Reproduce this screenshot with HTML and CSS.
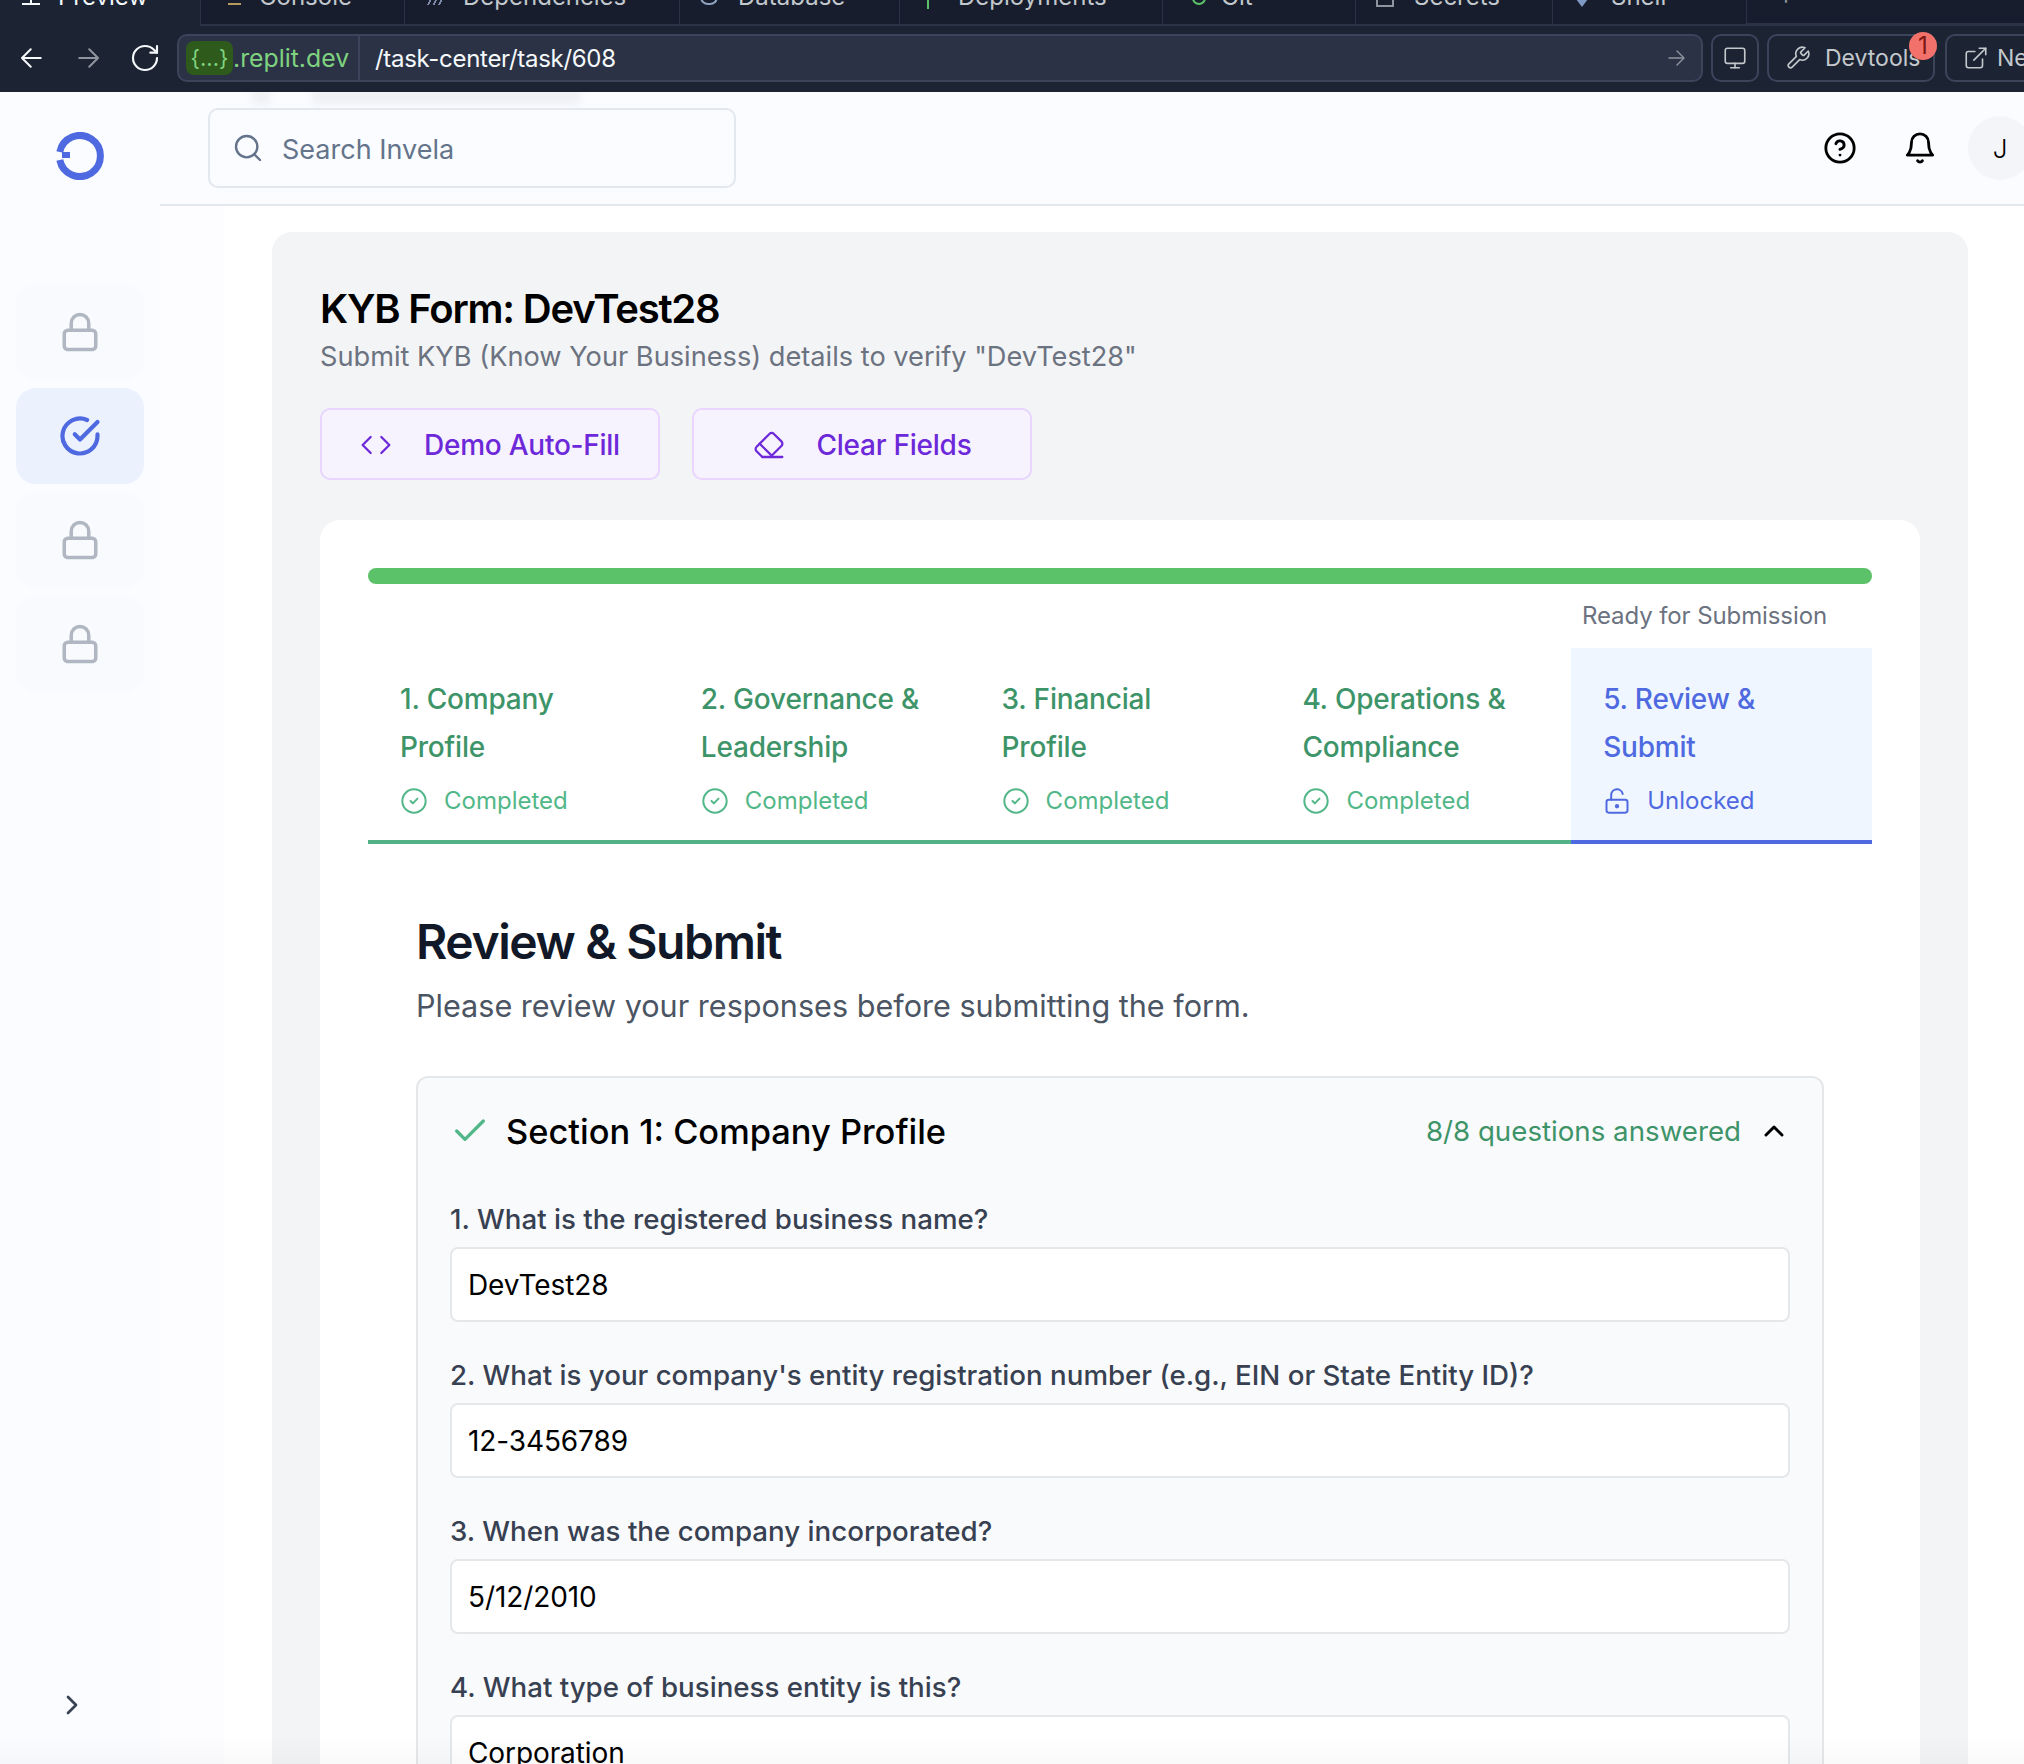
FILE: index.html

```html
<!DOCTYPE html>
<html>
  <head>
    <meta charset="utf-8">
    <title>KYB Form: DevTest28</title>
    <link rel="stylesheet" href="styles.css">
  </head>
  <body>
    <svg class="sprite" xmlns="http://www.w3.org/2000/svg">
      <symbol id="i-back" viewBox="0 0 24 24"><path d="M19 12H5"/><path d="m11 5-7 7 7 7"/></symbol>
      <symbol id="i-next" viewBox="0 0 24 24"><path d="M5 12h14"/><path d="m13 5 7 7-7 7"/></symbol>
      <symbol id="i-reload" viewBox="0 0 24 24"><path d="M21 12a9 9 0 1 1-9-9c2.52 0 4.93 1 6.74 2.74L21 8"/><path d="M21 3v5h-5"/></symbol>
      <symbol id="i-monitor" viewBox="0 0 24 24"><rect x="3" y="3" width="18" height="14" rx="2"/><path d="M8 21h8"/><path d="M12 17v4"/></symbol>
      <symbol id="i-wrench" viewBox="0 0 24 24"><path d="M14.7 6.3a1 1 0 0 0 0 1.4l1.6 1.6a1 1 0 0 0 1.4 0l3.77-3.77a6 6 0 0 1-7.94 7.94l-6.91 6.91a2.12 2.12 0 0 1-3-3l6.91-6.91a6 6 0 0 1 7.94-7.94l-3.76 3.76z"/></symbol>
      <symbol id="i-external" viewBox="0 0 24 24"><path d="M18 13v6a2 2 0 0 1-2 2H5a2 2 0 0 1-2-2V8a2 2 0 0 1 2-2h6"/><path d="M15 3h6v6"/><path d="M10 14 21 3"/></symbol>
      <symbol id="i-search" viewBox="0 0 24 24"><circle cx="11" cy="11" r="8"/><path d="m21 21-4.3-4.3"/></symbol>
      <symbol id="i-help" viewBox="0 0 24 24"><circle cx="12" cy="12" r="10"/><path d="M9.09 9a3 3 0 0 1 5.83 1c0 2-3 3-3 3"/><path d="M12 17h.01"/></symbol>
      <symbol id="i-bell" viewBox="0 0 24 24"><path d="M6 8a6 6 0 0 1 12 0c0 7 3 9 3 9H3s3-2 3-9"/><path d="M10.3 21a1.94 1.94 0 0 0 3.4 0"/></symbol>
      <symbol id="i-lock" viewBox="0 0 24 24"><rect x="3" y="11" width="18" height="11" rx="2"/><path d="M7 11V7a5 5 0 0 1 10 0v4"/></symbol>
      <symbol id="i-unlock" viewBox="0 0 24 24"><rect x="3" y="11" width="18" height="11" rx="2"/><circle cx="12" cy="16.5" r="1"/><path d="M7 11V7a5 5 0 0 1 9.9-1"/></symbol>
      <symbol id="i-task" viewBox="0 0 24 24"><path d="M22 11.08V12a10 10 0 1 1-5.93-9.14"/><path d="M22 4 12 14.01l-3-3"/></symbol>
      <symbol id="i-done" viewBox="0 0 24 24"><circle cx="12" cy="12" r="10"/><path d="m9 12 2 2 4-4"/></symbol>
      <symbol id="i-code" viewBox="0 0 24 24"><path d="m16 18 6-6-6-6"/><path d="m8 6-6 6 6 6"/></symbol>
      <symbol id="i-eraser" viewBox="0 0 24 24"><path d="m7 21-4.3-4.3c-1-1-1-2.5 0-3.4l9.6-9.6c1-1 2.5-1 3.4 0l5.6 5.6c1 1 1 2.5 0 3.4L13 21"/><path d="M22 21H7"/><path d="m5 11 9 9"/></symbol>
      <symbol id="i-check" viewBox="0 0 24 24"><path d="M20 6 9 17l-5-5"/></symbol>
      <symbol id="i-up" viewBox="0 0 24 24"><path d="m18 15-6-6-6 6"/></symbol>
      <symbol id="i-right" viewBox="0 0 24 24"><path d="m9 18 6-6-6-6"/></symbol>
    </svg>

    <!-- replit chrome -->
    <div class="chrome">
      <div class="chrome-tabs">
        <div class="chrome-tab chrome-tab-on"><span class="tab-glyph glyph-preview"></span>Preview</div>
        <div class="chrome-tab"><span class="tab-glyph glyph-console"></span>Console</div>
        <div class="chrome-tab"><span class="tab-glyph glyph-deps"></span>Dependencies</div>
        <div class="chrome-tab"><span class="tab-glyph glyph-db"></span>Database</div>
        <div class="chrome-tab"><span class="tab-glyph glyph-deploy"></span>Deployments</div>
        <div class="chrome-tab"><span class="tab-glyph glyph-git"></span>Git</div>
        <div class="chrome-tab"><span class="tab-glyph glyph-secrets"></span>Secrets</div>
        <div class="chrome-tab"><span class="tab-glyph glyph-shell"></span>Shell</div>
        <div class="chrome-tab chrome-tab-plus">+</div>
      </div>
      <div class="chrome-nav">
        <svg class="nav-icon nav-back"><use href="#i-back"/></svg>
        <svg class="nav-icon nav-next"><use href="#i-next"/></svg>
        <svg class="nav-icon nav-reload"><use href="#i-reload"/></svg>
        <div class="urlbar">
          <div class="url-domain"><span class="url-pill">{...}</span>.replit.dev</div>
          <div class="url-path">/task-center/task/608</div>
          <svg class="url-go"><use href="#i-next"/></svg>
        </div>
        <div class="chrome-btn chrome-btn-icon"><svg><use href="#i-monitor"/></svg></div>
        <div class="chrome-btn chrome-btn-dev"><svg><use href="#i-wrench"/></svg>Devtools<span class="dev-badge">1</span></div>
        <div class="chrome-btn chrome-btn-new"><svg><use href="#i-external"/></svg>New tab</div>
      </div>
    </div>

    <div class="app">
      <div class="sidebar">
        <svg class="logo" viewBox="0 0 48 48">
          <path d="M3.8 20A20.5 20.5 0 1 1 3.8 28"/>
          <rect x="6" y="20" width="8" height="6"/>
        </svg>
        <div class="side-nav">
          <div class="side-item"><svg><use href="#i-lock"/></svg></div>
          <div class="side-item side-item-on"><svg><use href="#i-task"/></svg></div>
          <div class="side-item"><svg><use href="#i-lock"/></svg></div>
          <div class="side-item"><svg><use href="#i-lock"/></svg></div>
        </div>
        <svg class="side-toggle"><use href="#i-right"/></svg>
      </div>

      <div class="content">
        <div class="topbar">
          <div class="search"><svg><use href="#i-search"/></svg><span class="search-text">Search Invela</span></div>
          <div class="top-actions">
            <svg class="top-icon"><use href="#i-help"/></svg>
            <svg class="top-icon"><use href="#i-bell"/></svg>
            <div class="avatar">J</div>
          </div>
        </div>

        <div class="page">
          <div class="rail"></div>
          <div class="panel">
            <h1 class="panel-title">KYB Form: DevTest28</h1>
            <p class="panel-sub">Submit KYB (Know Your Business) details to verify "DevTest28"</p>
            <div class="panel-btns">
              <div class="ghost-btn"><svg><use href="#i-code"/></svg>Demo Auto-Fill</div>
              <div class="ghost-btn"><svg><use href="#i-eraser"/></svg>Clear Fields</div>
            </div>

            <div class="card">
              <div class="progress"></div>
              <div class="progress-note">Ready for Submission</div>

              <div class="steps">
                <div class="step">
                  <div class="step-name">1. Company Profile</div>
                  <div class="step-status"><svg><use href="#i-done"/></svg>Completed</div>
                </div>
                <div class="step">
                  <div class="step-name">2. Governance &amp; Leadership</div>
                  <div class="step-status"><svg><use href="#i-done"/></svg>Completed</div>
                </div>
                <div class="step">
                  <div class="step-name">3. Financial Profile</div>
                  <div class="step-status"><svg><use href="#i-done"/></svg>Completed</div>
                </div>
                <div class="step">
                  <div class="step-name">4. Operations &amp; Compliance</div>
                  <div class="step-status"><svg><use href="#i-done"/></svg>Completed</div>
                </div>
                <div class="step step-on">
                  <div class="step-name">5. Review &amp; Submit</div>
                  <div class="step-status"><svg><use href="#i-unlock"/></svg>Unlocked</div>
                </div>
              </div>

              <div class="review">
                <h2 class="review-title">Review &amp; Submit</h2>
                <p class="review-sub">Please review your responses before submitting the form.</p>

                <div class="section">
                  <div class="section-head">
                    <svg class="section-check"><use href="#i-check"/></svg>
                    <div class="section-name">Section 1: Company Profile</div>
                    <div class="section-count">8/8 questions answered</div>
                    <svg class="section-chevron"><use href="#i-up"/></svg>
                  </div>

                  <div class="question">
                    <div class="question-label">1. What is the registered business name?</div>
                    <div class="answer">DevTest28</div>
                  </div>
                  <div class="question">
                    <div class="question-label">2. What is your company's entity registration number (e.g., EIN or State Entity ID)?</div>
                    <div class="answer">12-3456789</div>
                  </div>
                  <div class="question">
                    <div class="question-label">3. When was the company incorporated?</div>
                    <div class="answer">5/12/2010</div>
                  </div>
                  <div class="question">
                    <div class="question-label">4. What type of business entity is this?</div>
                    <div class="answer">Corporation</div>
                  </div>
                </div>
              </div>
            </div>
          </div>
        </div>
      </div>
    </div>

    <div class="blur-strip"></div>
    <div class="bottom-fade"></div>
  </body>
</html>
```

FILE: styles.css

```css
* {box-sizing: border-box;}
html, body {margin: 0; height: 100%;}
body {width: 2024px; height: 1764px; overflow: hidden; font-family: Inter, "Noto Sans", sans-serif; background: #fff; color: #000; position: relative;}
h1, h2, p {margin: 0; font-weight: normal;}
svg {fill: none; stroke: currentColor; stroke-width: 2; stroke-linecap: round; stroke-linejoin: round; flex-shrink: 0;}
.sprite {display: none;}

/* replit chrome */
.chrome {height: 92px; background: #1c2333; overflow: hidden;}
.chrome-tabs {height: 26px; display: grid; grid-template-columns: 200px 204px 275px 220px 263px 193px 197px 194px 1fr;}
.chrome-tab {height: 26px; overflow: hidden; display: flex; align-items: flex-end; padding: 0 0 15px 20px; font-size: 24px; line-height: 24px; color: #c2c8cc; background: #171d2d; border-left: 1px solid #2b3245; border-bottom: 2px solid #2b3245;}
.chrome-tab-on {background: #1c2333; color: #f5f9fc; border: 0; padding-bottom: 17px;}
.chrome-tab-plus {padding-left: 31px; border-bottom-width: 3px; color: #8f959e;}
.tab-glyph {width: 18px; height: 12px; margin-right: 20px; margin-bottom: 4px; flex-shrink: 0;}
.glyph-preview {margin-left: 2px; margin-right: 18px; border-bottom: 2px solid #f5f9fc; background: linear-gradient(#f5f9fc, #f5f9fc) center / 2px 100% no-repeat;}
.glyph-console {width: 13px; margin-left: 7px; margin-right: 18px; border-bottom: 2px solid #b59b5d;}
.glyph-deps {width: 16px; margin-left: 2px; background: repeating-linear-gradient(115deg, #7c8aa5 0 2px, transparent 2px 5px);}
.glyph-db {border: 2px solid #8da2c0; border-top: 0; border-radius: 0 0 8px 8px;}
.glyph-deploy {width: 2px; margin-left: 7px; margin-right: 29px; margin-bottom: 0; background: #5cc26a;}
.glyph-git {width: 14px; margin-left: 9px; margin-right: 15px; border: 2px solid #5cc26a; border-top: 0; border-radius: 0 0 7px 7px;}
.glyph-secrets {margin-bottom: 2px; border: 2px solid #8f959e; border-top: 0;}
.glyph-shell {margin-bottom: 2px; background: #7f98c4; clip-path: polygon(0 0, 100% 0, 50% 100%);}

.chrome-nav {height: 66px; display: flex; align-items: center; padding: 0 0 2px 0;}
.nav-icon {width: 30px; height: 30px; stroke-width: 1.6; color: #f5f9fc;}
.nav-back {margin-left: 17px;}
.nav-next {margin-left: 26px; color: #8f959e;}
.nav-reload {width: 32px; height: 32px; margin-left: 26px;}
.urlbar {width: 1526px; height: 48px; flex-shrink: 0; margin-left: 16px; display: flex; align-items: center; background: #2b3245; border: 2px solid #3c445c; border-radius: 10px;}
.url-domain {height: 100%; width: 181px; flex-shrink: 0; display: flex; align-items: center; padding-left: 7px; font-size: 24.8px; color: #7fd27f; border-right: 2px solid #3c445c; white-space: nowrap;}
.url-pill {height: 34px; width: 47px; flex-shrink: 0; text-align: center; line-height: 34px; background: #2e5a1c; border-radius: 8px; font-size: 22px;}
.url-path {margin-left: 15px; font-size: 24px; letter-spacing: -0.3px; color: #f5f9fc;}
.url-go {width: 24px; height: 24px; margin-left: auto; margin-right: 13px; stroke-width: 1.4; color: #8f959e;}
.chrome-btn {height: 48px; flex-shrink: 0; display: flex; align-items: center; margin-left: 8px; border: 2px solid #3c445c; border-radius: 10px; font-size: 23px; color: #c2c8cc; position: relative; white-space: nowrap;}
.chrome-btn svg {width: 26px; height: 26px; stroke-width: 1.5;}
.chrome-btn-icon {width: 48px; justify-content: center;}
.chrome-btn-dev {width: 168px; padding-left: 16px; gap: 14px;}
.chrome-btn-new {width: 120px; padding-left: 16px; gap: 8px; margin-left: 10px;}
.dev-badge {position: absolute; left: 140px; top: -4px; width: 28px; height: 28px; border-radius: 50%; background: #f2726b; color: #7a1712; font-size: 24px; line-height: 28px; text-align: center;}

/* app shell */
.app {display: flex; height: 1672px;}
.sidebar {width: 160px; flex-shrink: 0; background: #fbfcff; display: flex; flex-direction: column;}
.logo {width: 48px; height: 48px; margin: 40px 0 0 56px; stroke: #4f6ae0; stroke-width: 7; stroke-linecap: butt;}
.logo rect {fill: #4f6ae0; stroke: none;}
.side-nav {margin: 104px 16px 0 16px; display: flex; flex-direction: column; gap: 8px;}
.side-item {height: 96px; border-radius: 20px; background: #f9fafd; display: flex; align-items: center; justify-content: center; color: #b0b7c3;}
.side-item svg {width: 42px; height: 42px; stroke-width: 2;}
.side-item-on {background: #ecf1fe; color: #4f6ae0;}
.side-item-on svg {width: 42px; height: 42px; stroke-width: 2.4;}
.side-toggle {width: 32px; height: 32px; margin: auto 0 43px 56px; color: #374151;}

.content {flex: 1; min-width: 0; display: flex; flex-direction: column;}
.topbar {height: 114px; flex-shrink: 0; display: flex; align-items: center; padding: 0 0 0 48px; background: #fbfcff; border-bottom: 2px solid #e3e8ef;}
.search {width: 528px; height: 80px; display: flex; align-items: center; gap: 18px; padding-left: 22px; border: 2px solid #e3e8ef; border-radius: 10px; font-size: 27px; color: #64748b;}
.search svg {width: 32px; height: 32px; stroke-width: 1.8;}
.search-text {padding-top: 2px;}
.top-actions {margin-left: auto; margin-right: -8px; display: flex; align-items: center;}
.top-icon {width: 34px; height: 34px; stroke-width: 2;}
.top-icon + .top-icon {margin-left: 46px;}
.avatar {width: 64px; height: 64px; margin-left: 31px; border-radius: 50%; background: #f3f5f9; display: flex; align-items: center; justify-content: center; font-size: 26px; font-weight: 300;}

.page {flex: 1; display: flex; min-height: 0; overflow: hidden;}
.rail {width: 64px; flex-shrink: 0; background: #fdfdff;}
.panel {width: 1696px; margin: 26px 0 0 48px; padding: 53px 48px 0; background: #f3f4f6; border-radius: 20px 20px 0 0;}
.panel-title {font-size: 40px; line-height: 48px; font-weight: 600; letter-spacing: -1.2px;}
.panel-sub {margin-top: 4px; font-size: 27.2px; line-height: 40px; color: #6b7280;}
.panel-btns {margin-top: 31px; display: flex; gap: 32px;}
.ghost-btn {width: 340px; height: 72px; padding-top: 2px; display: flex; align-items: center; justify-content: center; gap: 32px; background: #f6f3fe; border: 2px solid #e9d5ff; border-radius: 10px; font-size: 28px; font-weight: 500; letter-spacing: -0.25px; color: #6d28d9;}
.ghost-btn svg {width: 32px; height: 32px; stroke-width: 1.7;}

.card {margin-top: 40px; padding: 48px 48px 0; background: #fff; border-radius: 20px 20px 0 0; height: 1300px;}
.progress {height: 16px; background: #5cc26a; border-radius: 8px;}
.progress-note {margin-top: 16px; padding-right: 45px; font-size: 24px; line-height: 32px; text-align: right; color: #6b7280; letter-spacing: -0.1px;}
.steps {margin-top: 16px; display: grid; grid-template-columns: repeat(5, 1fr);}
.step {height: 196px; padding: 27px 48px 0 32px; border-bottom: 4px solid #52b185;}
.step-name {font-size: 28px; line-height: 48px; font-weight: 500; letter-spacing: -0.2px; color: #3e9469;}
.step-status {margin-top: 14px; display: flex; align-items: center; gap: 16px; font-size: 24px; line-height: 32px; color: #52b788;}
.step-status svg {width: 28px; height: 28px; stroke-width: 1.7;}
.step-on {background: #eff6ff; border-bottom-color: #4f6ae0;}
.step-on .step-name, .step-on .step-status {color: #4f6ae0;}

.review {padding: 0 48px;}
.review-title {margin-top: 70px; font-size: 48px; line-height: 56px; font-weight: 600; letter-spacing: -1.4px; color: #111827;}
.review-sub {margin-top: 16px; font-size: 30.6px; line-height: 40px; color: #4b5563;}
.section {margin-top: 50px; height: 800px; padding: 29px 32px 0 32px; background: #f9fafb; border: 2px solid #e5e7eb; border-bottom: 0; border-radius: 12px 12px 0 0;}
.section-head {height: 48px; display: flex; align-items: center;}
.section-check {width: 40px; height: 40px; margin-left: 0; color: #52b788; stroke-width: 2;}
.section-name {margin-left: 16px; font-size: 34.4px; font-weight: 500;}
.section-count {margin-left: auto; font-size: 27.7px; color: #3e9469;}
.section-chevron {width: 32px; height: 32px; margin-left: 17px; stroke-width: 2.2;}
.question {margin-bottom: 32px;}
.section-head + .question {margin-top: 43px;}
.question-label {font-size: 27.7px; line-height: 42px; font-weight: 500; color: #374151;}
.answer {height: 75px; margin-top: 7px; padding-left: 16px; display: flex; align-items: center; background: #fff; border: 2px solid #e5e7eb; border-radius: 8px; font-size: 28px; letter-spacing: -0.1px;}

/* overlays */
.blur-strip {position: absolute; left: 252px; top: 90px; width: 328px; height: 14px; background: linear-gradient(90deg, #eeeff2 0 18px, transparent 18px 60px, #eeeff2 60px); filter: blur(4px); clip-path: inset(2px -10px -10px -10px);}
.bottom-fade {position: absolute; left: 0; right: 0; bottom: 0; height: 30px; background: linear-gradient(to bottom, rgba(0,0,0,0), rgba(0,0,0,0.025));}
```
